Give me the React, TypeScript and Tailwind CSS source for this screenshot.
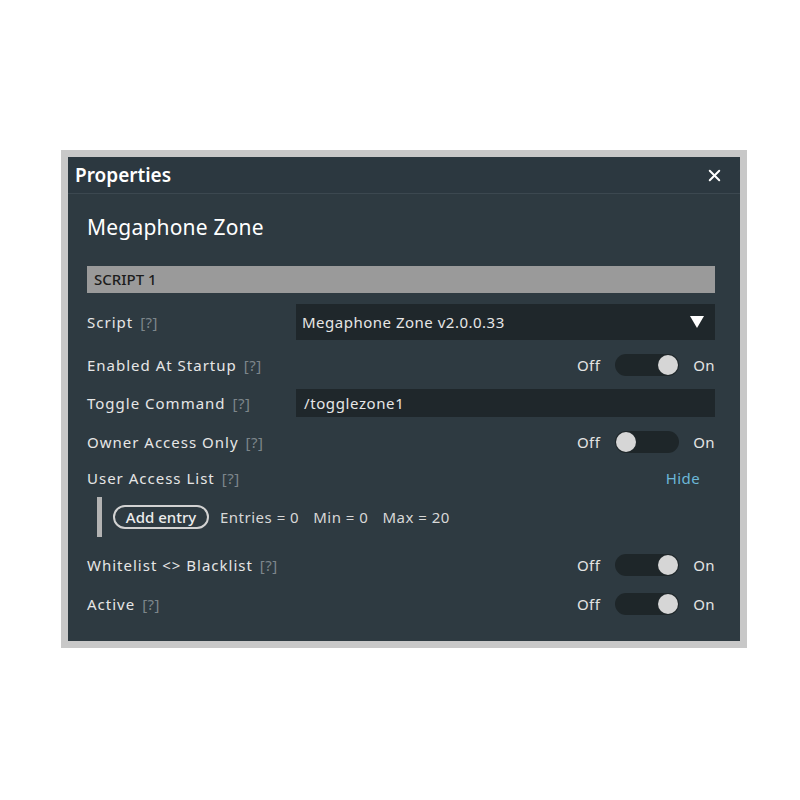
import { X } from "lucide-react";

const Help = () => <span className="ml-[7px] tracking-[0.5px] text-[#7d868b]">[?]</span>;

const Toggle = ({ on }: { on: boolean }) => (
  <div className="flex items-center text-[15px] tracking-[0.4px] text-[#e4e4e4]">
    <span>Off</span>
    <div
      className={`ml-[15px] flex h-[22px] w-[64px] items-center rounded-full bg-[#1e2629] px-[1px] ${
        on ? "justify-end" : "justify-start"
      }`}
    >
      <div className="h-[20px] w-[20px] rounded-full bg-[#d6d6d6]" />
    </div>
    <span className="ml-[14px]">On</span>
  </div>
);

const Row = ({ label, className, children }: { label: string; className: string; children?: React.ReactNode }) => (
  <div className={`flex items-center ${className}`}>
    <div className="w-[209px] shrink-0 whitespace-nowrap text-[15px] tracking-[1px] text-[#e6e6e6]">
      {label}
      <Help />
    </div>
    <div className="flex flex-1 items-center justify-end">{children}</div>
  </div>
);

export default function App() {
  return (
    <div className="min-h-screen bg-white pl-[61px] pt-[150px] font-['Noto_Sans',sans-serif]">
      <div className="w-[686px] bg-[#c8c8c8] p-[7px]">
        <div className="bg-[#2e3a41]">
          {/* title bar */}
          <div className="flex h-[37px] items-center justify-between border-b border-[#3c4850] bg-[#2c3840] pl-[7px] pr-[16px]">
            <span className="text-[19px] font-semibold text-white">Properties</span>
            <X size={19} strokeWidth={2.5} className="text-white" />
          </div>

          <div className="pb-[19px] pl-[19px] pr-[25px] pt-[19px]">
            <div className="flex h-[30px] items-center text-[21px] tracking-[0.2px] text-white">Megaphone Zone</div>

            <div className="mt-[23px] flex h-[27px] items-center bg-[#9a9a9a] px-[7px] text-[15px] font-medium text-[#1d1d1d]">
              SCRIPT 1
            </div>

            <Row label="Script" className="mt-[11px] h-[36px]">
              <div className="flex h-[36px] flex-1 items-center justify-between bg-[#1f272b] pl-[6px] pr-[11px] text-[15px] tracking-[0.5px] text-[#e6e6e6]">
                <span>Megaphone Zone v2.0.0.33</span>
                <svg width="14" height="12" viewBox="0 0 14 12">
                  <path d="M0 0 H14 L7 12 Z" fill="#ffffff" />
                </svg>
              </div>
            </Row>

            <Row label="Enabled At Startup" className="mt-[7px] h-[36px]">
              <Toggle on />
            </Row>

            <Row label="Toggle Command" className="mt-[6px] h-[28px]">
              <div className="flex h-[28px] flex-1 items-center bg-[#1f272b] px-[8px] text-[15px] tracking-[0.6px] text-[#e6e6e6]">
                /togglezone1
              </div>
            </Row>

            <Row label="Owner Access Only" className="mt-[7px] h-[36px]">
              <Toggle on={false} />
            </Row>

            <Row label="User Access List" className="mt-[0px] h-[36px]">
              <span className="pr-[15px] text-[15px] tracking-[0.4px] text-[#6cb7d8]">Hide</span>
            </Row>

            <div className="mt-[1px] flex h-[40px] items-center pl-[10px]">
              <div className="h-[40px] w-[5px] bg-[#b3b3b3]" />
              <button className="ml-[11px] flex h-[24px] w-[96px] items-center justify-center rounded-full border-2 border-[#d2d2d2] text-[15px] font-medium text-[#ececec]">
                Add entry
              </button>
              <div className="ml-[11px] flex gap-[14px] whitespace-pre text-[15px] tracking-[0.5px] text-[#d8d8d8]">
                <span>Entries = 0</span>
                <span>Min = 0</span>
                <span>Max = 20</span>
              </div>
            </div>

            <Row label="Whitelist <> Blacklist" className="mt-[10px] h-[36px]">
              <Toggle on />
            </Row>

            <Row label="Active" className="mt-[3px] h-[36px]">
              <Toggle on />
            </Row>
          </div>
        </div>
      </div>
    </div>
  );
}
